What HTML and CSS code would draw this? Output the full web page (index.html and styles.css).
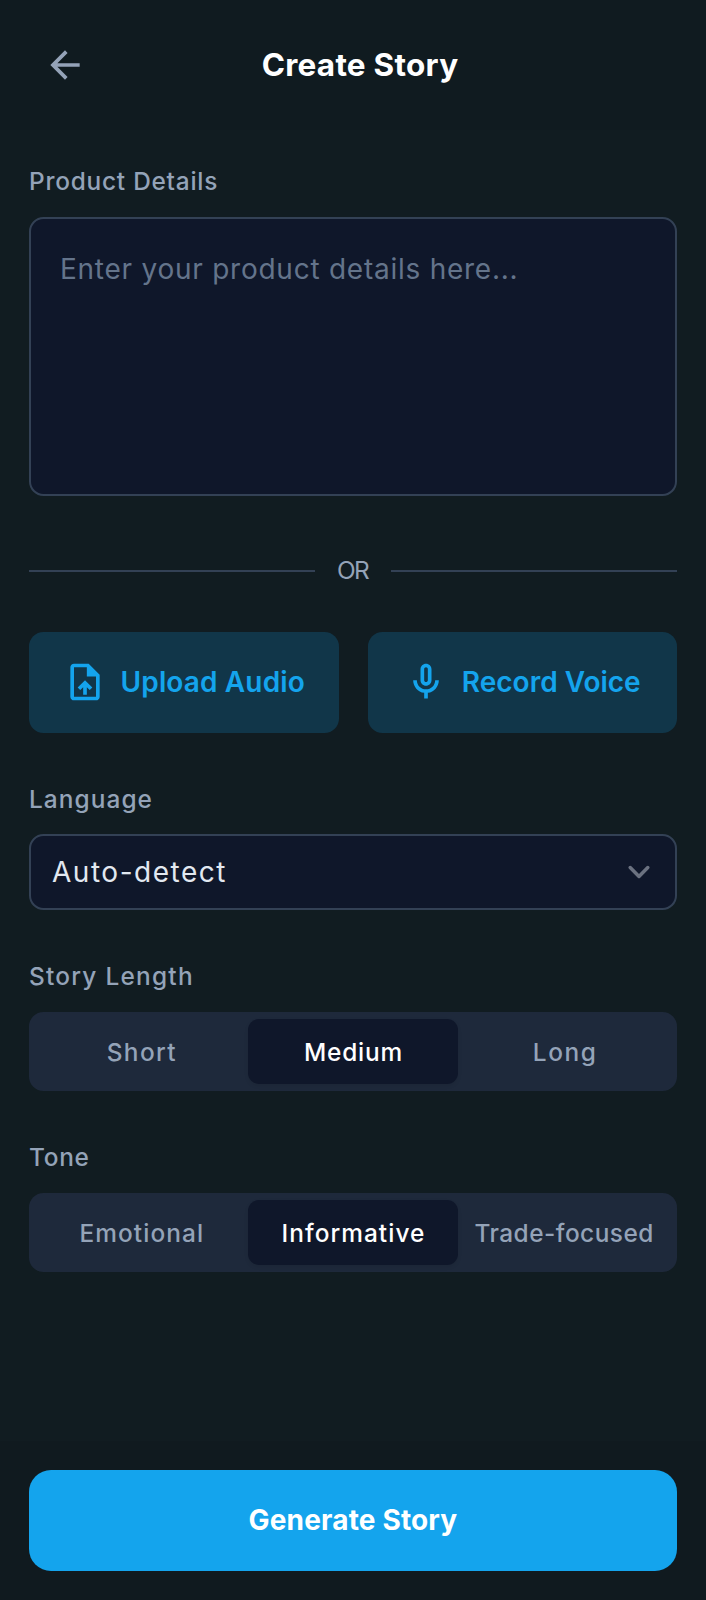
FILE: index.html
```html
<!DOCTYPE html>
<html lang="en">
<head>
<meta charset="utf-8">
<title>Create Story</title>
<link rel="stylesheet" href="styles.css">
</head>
<body>
<div class="screen">
  <header class="header">
    <button class="back" aria-label="Back">
      <svg class="icon" viewBox="0 0 24 24"><path d="M20 11H7.83l5.59-5.59L12 4l-8 8 8 8 1.41-1.41L7.83 13H20v-2z"/></svg>
    </button>
    <h1 class="title">Create Story</h1>
    <div class="header-spacer"></div>
  </header>

  <main class="main">
    <section class="field">
      <label class="label label-product" for="details">Product Details</label>
      <textarea class="details" id="details" placeholder="Enter your product details here..."></textarea>
    </section>

    <div class="divider"><span class="divider-text">OR</span></div>

    <div class="actions">
      <button class="action">
        <svg class="icon" viewBox="0 0 24 24"><path d="M14 2H6c-1.1 0-1.99.9-1.99 2L4 20c0 1.1.89 2 1.99 2H18c1.1 0 2-.9 2-2V8l-6-6zm4 18H6V4h7v5h5v11zM8 15.01l1.41 1.41L11 14.84V19h2v-4.16l1.59 1.59L16 15.01 12.01 11 8 15.01z"/></svg>
        <span class="upload-text">Upload Audio</span>
      </button>
      <button class="action">
        <svg class="icon" viewBox="0 0 24 24"><path d="M12 14c1.66 0 3-1.34 3-3V5c0-1.66-1.34-3-3-3S9 3.34 9 5v6c0 1.66 1.34 3 3 3zm-1-9c0-.55.45-1 1-1s1 .45 1 1v6c0 .55-.45 1-1 1s-1-.45-1-1V5zm6 6c0 2.76-2.24 5-5 5s-5-2.24-5-5H5c0 3.53 2.61 6.43 6 6.92V21h2v-3.08c3.39-.49 6-3.39 6-6.92h-2z"/></svg>
        <span class="record-text">Record Voice</span>
      </button>
    </div>

    <section class="field">
      <span class="label label-language">Language</span>
      <div class="select">
        <span>Auto-detect</span>
        <svg class="chevron" viewBox="0 0 20 20"><path d="M6 8l4 4 4-4"/></svg>
      </div>
    </section>

    <section class="field">
      <span class="label label-length">Story Length</span>
      <div class="segments">
        <button class="segment seg-short">Short</button>
        <button class="segment seg-medium active">Medium</button>
        <button class="segment seg-long">Long</button>
      </div>
    </section>

    <section class="field">
      <span class="label label-tone">Tone</span>
      <div class="segments">
        <button class="segment seg-emotional">Emotional</button>
        <button class="segment seg-informative active">Informative</button>
        <button class="segment seg-trade">Trade-focused</button>
      </div>
    </section>
  </main>

  <footer class="footer">
    <button class="generate">Generate Story</button>
  </footer>
</div>
</body>
</html>
```
FILE: styles.css
```css
* { box-sizing: border-box; }

body {
  margin: 0;
  background: #111c21;
  font-family: Inter, "Liberation Sans", sans-serif;
  color: #e2e8f0;
}

button {
  margin: 0;
  padding: 0;
  border: 0;
  background: none;
  color: inherit;
  font: inherit;
}

.screen {
  display: flex;
  flex-direction: column;
  height: 1600px;
}

.icon {
  display: block;
  flex: none;
  width: 44px;
  height: 44px;
  fill: currentColor;
}

.header {
  display: flex;
  align-items: center;
  height: 130px;
  padding: 0 29px;
  background: #101b20;
}

.back {
  padding: 14px;
  color: #94a3b8;
}

.title {
  flex: 1;
  margin: 0;
  color: #fff;
  font-size: 31.5px;
  font-weight: 700;
  line-height: 40px;
  letter-spacing: 0.26px;
  text-align: center;
}

.header-spacer { width: 58px; }

.main {
  display: flex;
  flex: 1;
  flex-direction: column;
  padding: 33px 29px 0;
}

.field {
  display: flex;
  flex-direction: column;
}

.label {
  margin-bottom: 18px;
  color: #94a3b8;
  font-size: 24.4px;
  font-weight: 500;
  line-height: 36px;
}

.label-product { letter-spacing: 0.77px; }
.label-language {
  margin-bottom: 17px;
  letter-spacing: 1.08px;
}
.label-length { letter-spacing: 1.25px; }
.label-tone { letter-spacing: 0.69px; }

.details {
  display: block;
  width: 100%;
  height: 279px;
  padding: 30px 29px;
  border: 2px solid #334155;
  border-radius: 14.5px;
  outline: 0;
  background: #0f172a;
  font: 400 28px/40px Inter, sans-serif;
  letter-spacing: 0.75px;
  resize: none;
}

.details::placeholder { color: #64748b; }

.divider {
  display: flex;
  align-items: center;
  gap: 22px;
  height: 36px;
  margin: 57px 0 42px;
}

.divider::before,
.divider::after {
  content: "";
  flex: 1;
  height: 2px;
  background: #334155;
}

.divider-text {
  width: 32px;
  padding-bottom: 2px;
  color: #94a3b8;
  font-size: 24.4px;
  letter-spacing: -1.6px;
  line-height: 34px;
}

.actions {
  display: grid;
  grid-template-columns: 1fr 1fr;
  gap: 29px;
  margin: 1px 0 48px;
}

.action {
  display: flex;
  align-items: center;
  justify-content: center;
  gap: 14px;
  height: 101px;
  padding-bottom: 2px;
  border-radius: 14.5px;
  background: #113649;
  color: #14a4ed;
  font-size: 28px;
  font-weight: 600;
  line-height: 40px;
}

.upload-text { letter-spacing: 0.14px; }
.record-text { letter-spacing: 0; }

.select {
  display: flex;
  align-items: center;
  justify-content: space-between;
  height: 76px;
  margin-bottom: 48px;
  padding: 0 14px 0 21px;
  border: 2px solid #334155;
  border-radius: 14.5px;
  background: #0f172a;
  font-size: 28px;
  letter-spacing: 1.52px;
}

.chevron {
  width: 44px;
  height: 44px;
  fill: none;
  stroke: #6b7280;
  stroke-width: 1.6;
  stroke-linecap: round;
  stroke-linejoin: round;
}

.segments {
  display: grid;
  grid-template-columns: repeat(3, 1fr);
  gap: 1px;
  height: 79px;
  margin-bottom: 48px;
  padding: 7px;
  border-radius: 14.5px;
  background: #1e293b;
}

.segment {
  border-radius: 11px;
  color: #94a3b8;
  font-size: 24.4px;
  font-weight: 500;
  line-height: 36px;
  text-indent: 1px;
  white-space: nowrap;
}

.segment.active {
  background: #0f172a;
  box-shadow: 0 2px 4px rgba(0, 0, 0, 0.08);
  color: #fff;
}

.seg-short { letter-spacing: 1.4px; }
.seg-medium { letter-spacing: 0.8px; }
.seg-long { letter-spacing: 1.6px; }
.seg-emotional { letter-spacing: 1.1px; }
.seg-informative { letter-spacing: 1.05px; }
.seg-trade {
  letter-spacing: 0.5px;
  text-indent: -1px;
}

.footer {
  height: 159px;
  padding: 29px;
  background: #101a1f;
}

.generate {
  display: block;
  width: 100%;
  height: 101px;
  padding-bottom: 2px;
  border-radius: 22px;
  background: #14a4ed;
  color: #fff;
  font-size: 28px;
  font-weight: 700;
  letter-spacing: 0.16px;
}
```
